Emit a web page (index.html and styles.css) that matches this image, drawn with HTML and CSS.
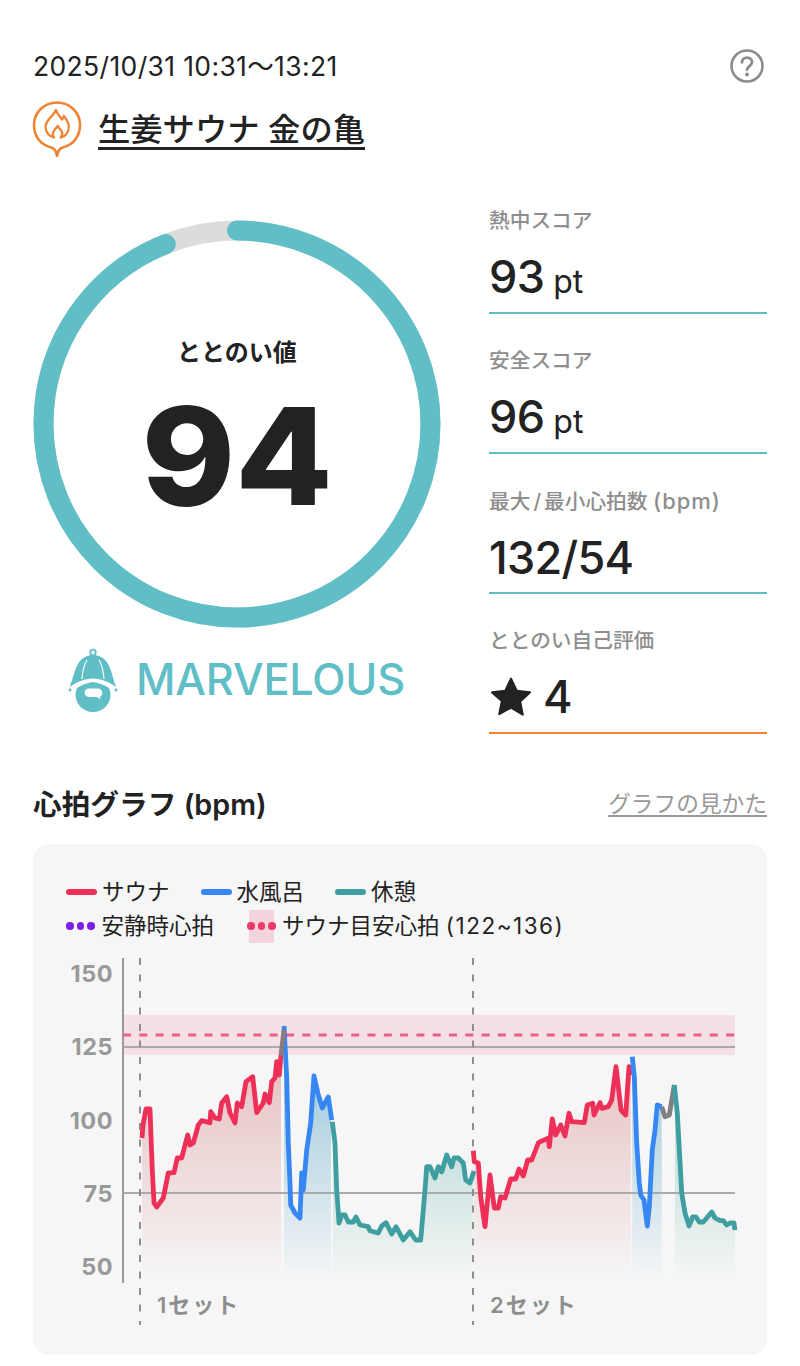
FILE: index.html
```html
<!DOCTYPE html>
<html lang="ja">
<head>
    <meta charset="UTF-8">
    <meta name="viewport" content="width=device-width, initial-scale=1.0">
    <title>サ活詳細</title>
    <link rel="stylesheet" href="styles.css">
</head>
<body>
    <div class="top-row">
        <p class="date">2025/10/31 10:31～13:21</p>
        <svg class="help" viewBox="0 0 36 36" width="36" height="36">
            <circle cx="18" cy="18" r="15.5" fill="none" stroke="#8c8c8c" stroke-width="2.600"/>
            <path d="M13 14.400c0-3 2.200-4.800 5-4.800s5 1.800 5 4.400c0 4-5 4.200-5 7.800" fill="none" stroke="#8c8c8c" stroke-width="2.800" stroke-linecap="round"/>
            <circle cx="18" cy="26.500" r="1.900" fill="#8c8c8c"/>
        </svg>
    </div>

    <div class="place">
        <svg class="pin" viewBox="25 95 60 70" width="60" height="70">
            <path d="M50.500 147.200C39.800 144.500 34 135.500 34 125c0-12.700 10.300-22.500 23-22.500S80 112.300 80 125c0 10.500-6 19.500-16.500 22.200-2.800.7-4.500 2-5.200 4.300L57 156l-1.300-4.500c-.7-2.300-2.400-3.600-5.200-4.300z" fill="none" stroke="#ee8434" stroke-width="2.600" stroke-linejoin="round"/>
            <path d="M56 110c1.500 4.500 4 6.500 6 9.500 1-1 1.500-2 1.800-3.500 3 3.500 5 7.500 5 11 0 6-4 10-8 10.500 1.500-2 2-4 1-6-1-2-3-3-4-5.500-1.500 2-3.500 3.500-4.500 6-.8 2-.4 4 .7 5.500-4.500-1-8.500-5-8.500-10.500 0-7 8-11 10.500-17z" fill="none" stroke="#ee8434" stroke-width="2.300" stroke-linejoin="round"/>
        </svg>
        <h1 class="place-name">生姜サウナ 金の亀</h1>
    </div>

    <div class="summary">
        <div class="score">
            <div class="gauge">
                <svg viewBox="0 0 408 408" width="408" height="408">
                    <circle cx="204" cy="204" r="193.500" fill="none" stroke="#dcdcdc" stroke-width="20"/>
                    <circle class="gauge-value" cx="204" cy="204" r="193.500" pathLength="100" fill="none" stroke="#5fbec6" stroke-width="20" stroke-linecap="round" stroke-dasharray="94 100"/>
                </svg>
                <div class="gauge-text">
                    <span class="gauge-label">ととのい値</span>
                    <span class="gauge-number">94</span>
                </div>
            </div>
            <div class="rank">
                <svg viewBox="60 645 65 70" width="65" height="70">
                    <circle cx="93" cy="653.500" r="2.800" fill="none" stroke="#5fbec6" stroke-width="1.800"/>
                    <path d="M69.500 688C73 680 74 672 78 665c4-7 10-9 15-9s11 2 15 9c4 7 5 15 8 23-7-5-15-8.500-23-8.500S77 683 69.500 688z" fill="#5fbec6"/>
                    <path d="M87 661c-3 5-4.500 11-5 19M99 661c3 5 4.500 11 5 19" fill="none" stroke="#fff" stroke-width="1.100"/>
                    <path d="M77 689c5-3.500 11-5.500 16-6 5 .5 11 2.500 16 6 1 3 1.500 5 1.500 7 0 9-7.500 17-17.500 17s-17.500-8-17.500-17c0-2 .5-4 1.500-7z" fill="#5fbec6"/>
                    <circle cx="70" cy="691" r="1.400" fill="#5fbec6"/>
                    <circle cx="116" cy="691" r="1.400" fill="#5fbec6"/>
                    <path d="M89.500 689.500h8c3 0 4.800 1.700 4.800 4.300 0 2-1 3.500-2.600 4l.8 2.700-3.400-2.500h-7.600c-3 0-5-1.600-5-4.200 0-2.800 2-4.300 5-4.300z" fill="#fff"/>
                </svg>
                <span class="rank-name">MARVELOUS</span>
            </div>
        </div>

        <div class="stats">
            <div class="stat">
                <p class="stat-label">熱中スコア</p>
                <p class="stat-value">93 <small>pt</small></p>
            </div>
            <div class="stat">
                <p class="stat-label">安全スコア</p>
                <p class="stat-value">96 <small>pt</small></p>
            </div>
            <div class="stat">
                <p class="stat-label">最大<span class="slash">/</span>最小心拍数 <span class="stat-unit">(bpm)</span></p>
                <p class="stat-value">132/54</p>
            </div>
            <div class="stat stat-self">
                <p class="stat-label">ととのい自己評価</p>
                <p class="stat-value">
                    <svg class="star" viewBox="0 0 40 40" width="42" height="42">
                        <path d="M20 2.500l5.400 11.600 12.600 1.500-9.300 8.700 2.500 12.500L20 30.100 8.800 36.300l2.500-12.500L2 15.600l12.600-1.500z" fill="#222" stroke="#222" stroke-width="2" stroke-linejoin="round"/>
                    </svg>
                    4
                </p>
            </div>
        </div>
    </div>

    <div class="graph-head">
        <h2 class="graph-title">心拍グラフ (bpm)</h2>
        <a class="graph-link">グラフの見かた</a>
    </div>

    <div class="graph-card">
        <div class="legend">
            <div class="legend-row">
                <span class="legend-item"><i class="swatch red"></i>サウナ</span>
                <span class="legend-item"><i class="swatch blue"></i>水風呂</span>
                <span class="legend-item"><i class="swatch teal"></i>休憩</span>
            </div>
            <div class="legend-row">
                <span class="legend-item"><span class="dots purple"><i></i><i></i><i></i></span>安静時心拍</span>
                <span class="legend-item target"><span class="target-band"><span class="dots pink"><i></i><i></i><i></i></span></span><span>サウナ目安心拍 <span class="range">(122~136)</span></span></span>
            </div>
        </div>

        <!-- viewBox はページ座標のまま -->
        <svg class="chart" viewBox="33 950 734 390" width="734" height="390">
            <defs>
                <linearGradient id="fillRed" gradientUnits="userSpaceOnUse" x1="0" y1="1040" x2="0" y2="1282">
                    <stop offset="0" stop-color="#e6bcbc"/>
                    <stop offset="1" stop-color="#f6f6f6"/>
                </linearGradient>
                <linearGradient id="fillBlue" gradientUnits="userSpaceOnUse" x1="0" y1="1070" x2="0" y2="1282">
                    <stop offset="0" stop-color="#a2cbdd"/>
                    <stop offset="1" stop-color="#f6f6f6"/>
                </linearGradient>
                <linearGradient id="fillTeal" gradientUnits="userSpaceOnUse" x1="0" y1="1120" x2="0" y2="1282">
                    <stop offset="0" stop-color="#bcdcd9"/>
                    <stop offset="1" stop-color="#f6f6f6"/>
                </linearGradient>
            </defs>

            <rect x="123" y="1015" width="612" height="40" fill="#f5e0e5"/>

            <!-- 塗り -->
            <polygon fill="url(#fillRed)" points="142,1138 143,1125 146,1109 150,1109 152.300,1170 154,1203 156.700,1207 163.300,1198 168.300,1173 174,1172.700 177.300,1158 181.700,1158 187.700,1135 190,1145 193.300,1143 198.300,1125 201.700,1120.700 210,1122.700 210.700,1111.700 215,1118 219.300,1119 221.700,1103 226.700,1096.700 230,1113 235,1123 237.300,1103 241.700,1106.700 246,1081.700 252.700,1076.700 256.700,1112.700 263.300,1103 265,1094 269.300,1102.700 271.700,1081.700 275,1078 276.700,1061.700 279.300,1075 281,1055 281,1282 142,1282"/>
            <polygon fill="url(#fillBlue)" points="284,1026 286.700,1076.700 288.300,1143 290,1183 290.700,1205 295,1213 300,1218 301.700,1173 303.300,1190 306.700,1150 310.700,1123 314,1076 318.300,1095 322.300,1108 328.300,1097 331,1120 331,1282 284,1282"/>
            <polygon fill="url(#fillTeal)" points="333,1121.700 335,1143 336.700,1190 339,1223 341.700,1215 345,1215 348.300,1222 353.300,1222 356,1217 360,1225 368.300,1226.700 370,1230.700 378.300,1233 381.700,1226 386,1222.700 391.700,1234 396,1226.700 403.300,1240 410,1231.700 415.700,1240 420.700,1240 425,1190 426.700,1166.700 430,1166.700 435,1178 438.300,1166.700 441.700,1171.700 446.700,1155 451.700,1166.700 454,1158 458.300,1158 463.300,1163 465.700,1180 470,1183 473,1171 473,1282 333,1282"/>
            <polygon fill="url(#fillRed)" points="474,1150.700 474.300,1161.700 478.300,1163 480.700,1196.700 485,1226.700 490,1175 494.300,1208 498.300,1208 500.700,1196.700 505,1198 510.700,1179 515.700,1179 519,1169 523.300,1176 527.700,1160 531.700,1160 538.300,1143 540,1141.700 548.300,1138.300 549.300,1146.700 552.300,1119 555.700,1135 560.700,1125 565,1136 569,1113.300 571.700,1121.700 584.300,1122.700 587.300,1105 592.700,1103.300 594,1115 600,1102.700 601.700,1108.300 608.300,1106.700 611.700,1100 616,1066.700 621,1110 625.700,1115 629,1066.700 630.700,1075 630.700,1282 474,1282"/>
            <polygon fill="url(#fillBlue)" points="632.300,1056.700 634.300,1076.700 636.700,1143 639.300,1183 640.700,1195 644,1200 647.300,1226 649.300,1206.700 652.300,1150 655,1130 657.300,1105 661.700,1106.700 661.700,1282 632.300,1282"/>
            <polygon fill="url(#fillTeal)" points="675,1085 677.300,1113 681.700,1193 685,1213 689,1226 692.700,1217 696,1217 699.300,1222 703.300,1222 706.700,1218 711.700,1212 715,1218 720,1220.700 723.300,1220.700 726.700,1225 730,1223 734,1223 735,1230 735,1282 675,1282"/>

            <!-- 軸と目安線 -->
            <line class="axis" x1="123" y1="958" x2="123" y2="1283"/>
            <line class="axis-h" x1="123" y1="1047" x2="735" y2="1047"/>
            <line class="axis-h" x1="123" y1="1193" x2="735" y2="1193"/>
            <line class="set-line" x1="140" y1="958" x2="140" y2="1325"/>
            <line class="set-line" x1="473" y1="958" x2="473" y2="1325"/>
            <line class="target-line" x1="123" y1="1035" x2="735" y2="1035"/>

            <!-- 心拍 -->
            <polyline class="hr" stroke="#ee2f58" points="142,1138 143,1125 146,1109 150,1109 152.300,1170 154,1203 156.700,1207 163.300,1198 168.300,1173 174,1172.700 177.300,1158 181.700,1158 187.700,1135 190,1145 193.300,1143 198.300,1125 201.700,1120.700 210,1122.700 210.700,1111.700 215,1118 219.300,1119 221.700,1103 226.700,1096.700 230,1113 235,1123 237.300,1103 241.700,1106.700 246,1081.700 252.700,1076.700 256.700,1112.700 263.300,1103 265,1094 269.300,1102.700 271.700,1081.700 275,1078 276.700,1061.700 279.300,1075 281,1055"/>
            <polyline class="hr" stroke="#3686f3" points="284,1026 286.700,1076.700 288.300,1143 290,1183 290.700,1205 295,1213 300,1218 301.700,1173 303.300,1190 306.700,1150 310.700,1123 314,1076 318.300,1095 322.300,1108 328.300,1097 331.700,1120"/>
            <polyline class="hr" stroke="#8a7c80" points="281,1055 284,1030"/>
            <polyline class="hr" stroke="#3f9ea0" points="332.300,1121.700 335,1143 336.700,1190 339,1223 341.700,1215 345,1215 348.300,1222 353.300,1222 356,1217 360,1225 368.300,1226.700 370,1230.700 378.300,1233 381.700,1226 386,1222.700 391.700,1234 396,1226.700 403.300,1240 410,1231.700 415.700,1240 420.700,1240 425,1190 426.700,1166.700 430,1166.700 435,1178 438.300,1166.700 441.700,1171.700 446.700,1155 451.700,1166.700 454,1158 458.300,1158 463.300,1163 465.700,1180 470,1183 474,1171"/>
            <polyline class="hr" stroke="#ee2f58" points="473.300,1150.700 474.300,1161.700 478.300,1163 480.700,1196.700 485,1226.700 490,1175 494.300,1208 498.300,1208 500.700,1196.700 505,1198 510.700,1179 515.700,1179 519,1169 523.300,1176 527.700,1160 531.700,1160 538.300,1143 540,1141.700 548.300,1138.300 549.300,1146.700 552.300,1119 555.700,1135 560.700,1125 565,1136 569,1113.300 571.700,1121.700 584.300,1122.700 587.300,1105 592.700,1103.300 594,1115 600,1102.700 601.700,1108.300 608.300,1106.700 611.700,1100 616,1066.700 621,1110 625.700,1115 629,1066.700 630.700,1075"/>
            <polyline class="hr" stroke="#808080" points="661.700,1106.700 665,1116.700 669.300,1115 674.300,1085"/>
            <polyline class="hr" stroke="#3686f3" points="632.300,1056.700 634.300,1076.700 636.700,1143 639.300,1183 640.700,1195 644,1200 647.300,1226 649.300,1206.700 652.300,1150 655,1130 657.300,1105 661.700,1106.700"/>
            <polyline class="hr" stroke="#3f9ea0" points="674.300,1085 677.300,1113 681.700,1193 685,1213 689,1226 692.700,1217 696,1217 699.300,1222 703.300,1222 706.700,1218 711.700,1212 715,1218 720,1220.700 723.300,1220.700 726.700,1225 730,1223 734,1223 735,1230"/>

            <text class="y-label" x="113" y="982">150</text>
            <text class="y-label" x="113" y="1055">125</text>
            <text class="y-label" x="113" y="1129">100</text>
            <text class="y-label" x="113" y="1202">75</text>
            <text class="y-label" x="113" y="1275">50</text>
            <text class="set-label" x="157" y="1313">1セット</text>
            <text class="set-label" x="490" y="1313">2セット</text>
        </svg>
    </div>
</body>
</html>
```

FILE: styles.css
```css
body {
    margin: 0;
    padding: 0 33px;
    background: #fff;
    color: #222;
    font-family: 'Inter', 'Noto Sans CJK JP', sans-serif;
    overflow: hidden;
}

p, h1, h2 {
    margin: 0;
}

.top-row {
    display: flex;
    justify-content: space-between;
    align-items: center;
    padding-top: 48px;
    height: 36px;
}

.date {
    font-size: 26.500px;
    letter-spacing: .35px;
    line-height: 36px;
}

.help {
    margin-right: 2px;
}

.place {
    display: flex;
    align-items: center;
    gap: 13px;
    margin: 11px 0 0 -8px;
    height: 70px;
}

.pin {
    flex: none;
}

.place-name {
    font-size: 32.300px;
    font-weight: 500;
    line-height: 35px;
    border-bottom: 3px solid #222;
    margin-top: 2px;
}

/* スコア */
.summary {
    display: flex;
    justify-content: space-between;
    margin-top: 55px;
}

.score {
    width: 408px;
}

.gauge {
    display: grid;
    width: 408px;
    height: 408px;
}

.gauge svg, .gauge-text {
    grid-area: 1 / 1;
}

.gauge-value {
    transform: rotate(-90deg);
    transform-origin: 204px 204px;
}

.gauge-text {
    display: flex;
    flex-direction: column;
    align-items: center;
    padding-top: 114px;
}

.gauge-label {
    font-size: 24px;
    font-weight: 600;
    line-height: 38px;
}

.gauge-number {
    font-size: 135px;
    font-weight: 800;
    line-height: 150px;
    margin-top: 9px;
    transform: scaleX(1.05);
}

.rank {
    display: flex;
    align-items: center;
    gap: 11px;
    margin-top: 16px;
    padding-left: 27px;
}

.rank-name {
    color: #5fbec6;
    font-size: 43.300px;
    font-weight: 550;
    letter-spacing: -.2px;
}

.stats {
    width: 278px;
    margin-top: -46px;
}

.stat {
    height: 138px;
    border-bottom: 2px solid #5fbec6;
}

.stat-self {
    border-bottom-color: #ee8434;
}

.stat-label {
    color: #8e8e8e;
    font-size: 20.700px;
    font-weight: 500;
    line-height: 30px;
    padding-top: 32px;
}

.slash {
    margin: 0 3px;
}

.stat-unit {
    font-size: 22px;
    letter-spacing: 1px;
}

.stat-value {
    display: flex;
    align-items: baseline;
    gap: 9px;
    font-size: 45px;
    font-weight: 550;
    letter-spacing: -.7px;
    line-height: 54px;
    margin-top: 14px;
}

.stat-value small {
    font-size: 32px;
    font-weight: 400;
    letter-spacing: 0;
}

.star {
    align-self: center;
    margin: 0 2px 0 1px;
}

/* グラフ */
.graph-head {
    display: flex;
    justify-content: space-between;
    align-items: center;
    margin-top: 46px;
    height: 44px;
}

.graph-title {
    font-size: 28.700px;
    font-weight: 600;
}

.graph-link {
    color: #999;
    font-size: 22.700px;
    text-decoration: underline;
    text-underline-offset: 3px;
}

.graph-card {
    margin-top: 20px;
    height: 511px;
    background: #f6f6f6;
    border-radius: 16px;
    overflow: hidden;
}

.legend {
    display: flex;
    flex-direction: column;
    padding: 31px 0 0 33px;
    height: 75px;
    font-size: 22.500px;
}

.legend-row {
    display: flex;
    gap: 31px;
    height: 34px;
    align-items: center;
}

.legend-item {
    display: flex;
    align-items: center;
    gap: 5px;
    line-height: 34px;
}

.swatch {
    width: 31px;
    height: 6px;
    border-radius: 3px;
}

.red { background: #ee2f58; }
.blue { background: #3686f3; }
.teal { background: #3f9ea0; }

.dots {
    display: flex;
    gap: 3px;
    margin-right: 2px;
}

.dots i {
    width: 7.500px;
    height: 7.500px;
    border-radius: 50%;
}

.purple i { background: #7d1de8; }
.pink i { background: #ee3b6b; }

.target {
    gap: 8px;
    margin-left: 4px;
}

.target-band {
    display: flex;
    align-items: center;
    justify-content: center;
    width: 25px;
    height: 33px;
    background: #f3d3dc;
}

.target-band .dots {
    margin: 0;
}

.range {
    letter-spacing: 1.500px;
}

.chart {
    display: block;
}

.axis {
    stroke: #999;
    stroke-width: 2;
}

.axis-h {
    stroke: #aaa;
    stroke-width: 2;
}

.set-line {
    stroke: #8f8f8f;
    stroke-width: 2;
    stroke-dasharray: 7 9.500;
}

.target-line {
    stroke: #e8608a;
    stroke-width: 3;
    stroke-dasharray: 8 8.300;
}

.hr {
    fill: none;
    stroke-width: 4.800;
    stroke-linejoin: round;
}

.y-label {
    fill: #999;
    font-size: 23.500px;
    font-weight: 700;
    letter-spacing: .5px;
    text-anchor: end;
}

.set-label {
    fill: #8e8e8e;
    font-size: 22px;
    font-weight: 600;
    letter-spacing: 2px;
}
```
